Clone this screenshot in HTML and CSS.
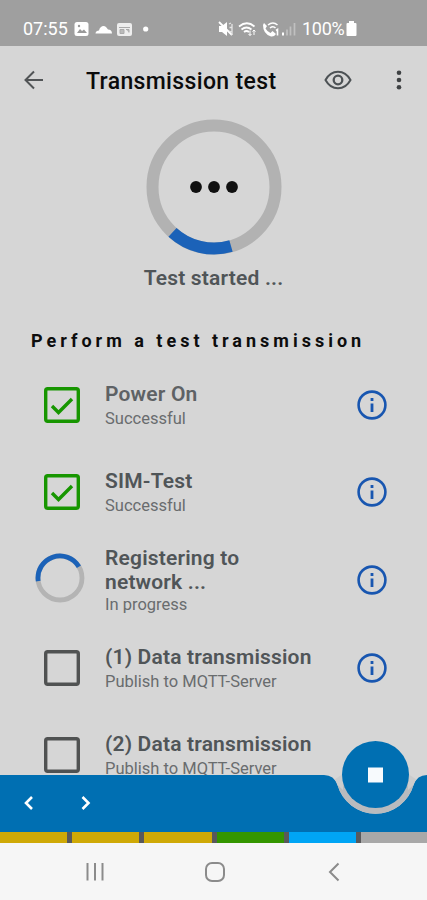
FILE: index.html
```html
<!DOCTYPE html>
<html lang="en">
<head>
<meta charset="utf-8">
<title>Transmission test</title>
<link rel="stylesheet" href="styles.css">
</head>
<body>
<div class="screen">
  <header class="status">
    <span class="clock">07:55</span>
    <svg class="status-left" width="76" height="18" viewBox="0 0 76 18">
      <rect x="0.5" y="2" width="14" height="14" rx="2.5" fill="#fff"/>
      <path d="M3 13l3-4 2 2 2-1.500 3 3.500z" fill="#999"/><circle cx="5" cy="6" r="1.200" fill="#999"/>
      <path d="M21.500 13.500c0-2 1.800-3 3.500-3 .8-4 4.500-5.500 7-3.500l2 2.500c2.500 0 4 1.500 4 4z" fill="#fff"/>
      <rect x="43" y="3" width="15" height="13" rx="2" fill="#eee"/>
      <path d="M45 7.500h11M46 9.500h4v4h-4zM52 9.500h3v3" stroke="#aaa" fill="#bbb"/>
      <circle cx="71.700" cy="9" r="2.600" fill="#fff"/>
    </svg>
    <svg class="status-right" width="80" height="18" viewBox="0 0 80 18">
      <path d="M1 6h3l5-4v14l-5-4H1z" fill="#fff"/><path d="M1 2l13 13" stroke="#fff" stroke-width="1.800"/><path d="M11 4l2-1M11.500 7.500h3M11 11l3 1M14 4v11" stroke="#e5e5e5" stroke-width="1.300"/>
      <g fill="none" stroke="#fff" stroke-width="1.700"><path d="M21 6.500q8-6.500 15.500 0M23.500 9.500q5-4 10 0M26 12q2.500-2 5 0"/><path d="M32 10.500v5M36 10v5M30.500 14l1.500 1.500 1.500-1.500M34.500 11.500l1.500-1.500 1.500 1.500" stroke-width="1"/></g>
      <path d="M46 3l3 3-1.500 2.500q2 3.500 5 4.500l2-2 3.500 3q-2 3-5 2.500Q45 14 45 5z" fill="#fff"/>
      <path d="M50 5q5-4 9.500 0M52 8q3-2.500 5.500 0M58 10.500l1.500-1v6" fill="none" stroke="#fff" stroke-width="1.600"/>
      <path d="M65 12.500v3" stroke="#fff" stroke-width="2"/><path d="M69 9.500v6M72.500 6.500v9M76.500 3v12.500" stroke="#c0c0c0" stroke-width="1.700"/>
    </svg>
    <span class="charge">100%</span>
    <svg width="11" height="16" viewBox="0 0 11 16"><path d="M3 2V0h5v2h1.500q1 0 1 1v11q0 1-1 1h-8q-1 0-1-1V3q0-1 1-1z" fill="#fff"/></svg>
  </header>

  <div class="appbar">
    <svg width="20" height="20" viewBox="0 0 20 20"><path d="M19 10H2M10 1.500L1.500 10l8.500 8.500" fill="none" stroke="#515456" stroke-width="2"/></svg>
    <h1>Transmission test</h1>
    <svg class="eye" width="28" height="20" viewBox="0 0 28 20" fill="none" stroke="#4d5255"><path d="M1.500 10Q6 1.700 14 1.700T26.500 10Q22 18.300 14 18.300T1.500 10z" stroke-width="2"/><circle cx="14" cy="10" r="4.300" stroke-width="2.300"/></svg>
    <svg class="more" width="6" height="20" viewBox="0 0 6 20" fill="#3f4244"><circle cx="3" cy="2.800" r="2.300"/><circle cx="3" cy="10" r="2.300"/><circle cx="3" cy="17.200" r="2.300"/></svg>
  </div>

  <section class="progress">
    <svg width="136" height="136" viewBox="0 0 136 136">
      <circle cx="68" cy="68" r="61.500" fill="none" stroke="#b2b2b2" stroke-width="12"/>
      <path d="M85 127.100A61.500 61.500 0 0 1 26.500 113.300" fill="none" stroke="#1b62b8" stroke-width="12"/>
      <g fill="#101010"><circle cx="50" cy="68" r="5.900"/><circle cx="68" cy="68" r="5.900"/><circle cx="86" cy="68" r="5.900"/></g>
    </svg>
    <p>Test started ...</p>
  </section>

  <h2>Perform a test transmission</h2>

  <main class="steps">
    <div class="step">
      <span class="mark"><svg width="36" height="36" viewBox="0 0 36 36" fill="none" stroke="#179600"><rect x="1.700" y="1.700" width="32.600" height="32.600" rx="2" stroke-width="3.400"/><path d="M8 19l6.500 6.500L28 12" stroke-width="3.400"/></svg></span>
      <div class="label"><h3 class="soft">Power On</h3><p>Successful</p></div>
      <svg class="info" width="30" height="30" viewBox="0 0 30 30"><circle cx="15" cy="15" r="13.400" fill="none" stroke="#1856b0" stroke-width="2.600"/><path d="M15 13.500v8.500M15 8v3" stroke="#1856b0" stroke-width="2.800"/></svg>
    </div>
    <div class="step">
      <span class="mark"><svg width="36" height="36" viewBox="0 0 36 36" fill="none" stroke="#179600"><rect x="1.700" y="1.700" width="32.600" height="32.600" rx="2" stroke-width="3.400"/><path d="M8 19l6.500 6.500L28 12" stroke-width="3.400"/></svg></span>
      <div class="label"><h3>SIM-Test</h3><p>Successful</p></div>
      <svg class="info" width="30" height="30" viewBox="0 0 30 30"><circle cx="15" cy="15" r="13.400" fill="none" stroke="#1856b0" stroke-width="2.600"/><path d="M15 13.500v8.500M15 8v3" stroke="#1856b0" stroke-width="2.800"/></svg>
    </div>
    <div class="step">
      <span class="mark spinner"><svg width="50" height="50" viewBox="0 0 50 50" fill="none" stroke-width="4.800"><circle cx="25" cy="25" r="22" stroke="#b4b4b4"/><path d="M3.200 28.100A22 22 0 0 1 43.900 13.700" stroke="#1b62b8"/></svg></span>
      <div class="label two-line"><h3>Registering to<br>network ...</h3><p>In progress</p></div>
      <svg class="info" width="30" height="30" viewBox="0 0 30 30"><circle cx="15" cy="15" r="13.400" fill="none" stroke="#1856b0" stroke-width="2.600"/><path d="M15 13.500v8.500M15 8v3" stroke="#1856b0" stroke-width="2.800"/></svg>
    </div>
    <div class="step">
      <span class="mark"><svg width="36" height="36" viewBox="0 0 36 36" fill="none" stroke="#505252"><rect x="1.700" y="1.700" width="32.600" height="32.600" rx="2" stroke-width="3.400"/></svg></span>
      <div class="label"><h3>(1) Data transmission</h3><p>Publish to MQTT-Server</p></div>
      <svg class="info" width="30" height="30" viewBox="0 0 30 30"><circle cx="15" cy="15" r="13.400" fill="none" stroke="#1856b0" stroke-width="2.600"/><path d="M15 13.500v8.500M15 8v3" stroke="#1856b0" stroke-width="2.800"/></svg>
    </div>
    <div class="step">
      <span class="mark"><svg width="36" height="36" viewBox="0 0 36 36" fill="none" stroke="#505252"><rect x="1.700" y="1.700" width="32.600" height="32.600" rx="2" stroke-width="3.400"/></svg></span>
      <div class="label"><h3>(2) Data transmission</h3><p>Publish to MQTT-Server</p></div>
    </div>
  </main>

  <footer class="dock">
    <svg class="dock-shape" width="427" height="92" viewBox="0 0 427 92">
      <path d="M0 35H324Q334 35 337.500 45A39.500 39.500 0 0 0 413.500 45Q417 35 427 35V92H0z" fill="#006fb2"/>
      <path d="M337.500 45A39.500 39.500 0 0 0 413.500 45L408 36H343z" fill="#b9bbbe"/>
      <path d="M334.500 39.500Q336.500 42 337.500 45L343 50V34zM416.500 39.500Q414.500 42 413.500 45L408 50V34z" fill="#cbcccd"/>
      <circle cx="375.500" cy="34.500" r="33.500" fill="#006fb2"/>
      <rect x="368" y="27.500" width="15" height="15" fill="#f7fafd"/>
      <path d="M32 57l-6 6 6 6M82.500 57l6 6-6 6" fill="none" stroke="#fff" stroke-width="2.600"/>
    </svg>
    <div class="segments"><i class="gold"></i><i class="gold"></i><i class="gold"></i><i class="green"></i><i class="sky"></i><i class="gray"></i></div>
    <nav class="navbar">
      <svg width="20" height="20" viewBox="0 0 20 20"><path d="M2.500 1v17.500M10 1v17.500M17.500 1v17.500" stroke="#8b8b8b" stroke-width="2"/></svg>
      <svg width="20" height="20" viewBox="0 0 20 20"><rect x="1" y="1" width="18" height="18" rx="6" fill="none" stroke="#8b8b8b" stroke-width="2"/></svg>
      <svg width="20" height="20" viewBox="0 0 20 20"><path d="M14.500 1.500L6 10l8.500 8.500" fill="none" stroke="#8b8b8b" stroke-width="2"/></svg>
    </nav>
  </footer>
</div>
</body>
</html>
```

FILE: styles.css
```css
* { box-sizing: border-box; }
body, h1, h2, h3, p { margin: 0; }
body { font-family: Roboto, sans-serif; background: #d6d6d6; }
svg { display: block; flex: none; }

.screen { position: relative; width: 427px; height: 900px; overflow: hidden; display: flex; flex-direction: column; }

.status { height: 46px; flex: none; background: #9f9f9f; display: flex; align-items: center; padding: 11px 0 0 23px; color: #fff; font-size: 18px; line-height: 20px; }
.clock { width: 51px; }
.status-right { margin-left: 68px; }
.charge { width: 43px; margin-left: 4px; margin-right: 1px; letter-spacing: -0.3px; }

.appbar { height: 68px; flex: none; display: flex; align-items: center; padding-left: 24px; }
.appbar h1 { width: 238px; margin-left: 42px; margin-top: 3px; font-size: 23px; line-height: 30px; font-weight: 500; letter-spacing: 0.350px; color: #0b0b0b; }
.more { margin-left: 44px; }

.progress { flex: none; height: 210px; padding-top: 4.500px; display: flex; flex-direction: column; align-items: center; }
.progress p { margin-top: 8px; font-size: 21px; line-height: 30px; font-weight: 600; letter-spacing: 0.180px; color: #505558; }

h2 { flex: none; height: 37px; padding: 5px 0 0 31px; font-size: 18px; line-height: 24px; font-weight: 700; letter-spacing: 4px; color: #0d0d0d; white-space: nowrap; }

.steps { flex: none; display: flex; flex-direction: column; }
.step { height: 87.600px; display: flex; align-items: center; padding-left: 35px; }
.mark { width: 70px; display: flex; padding-left: 9px; }
.spinner { padding: 0 0 4px; }
.label { width: 252px; padding-top: 1px; color: #505558; }
.label h3 { font-size: 21px; line-height: 25px; font-weight: 600; letter-spacing: 0.180px; white-space: nowrap; }
.label h3.soft { color: #5e6265; }
.label p { font-size: 16.500px; line-height: 20px; margin-top: 2px; color: #696c6e; }
.two-line h3 { line-height: 24.500px; }
.two-line p { margin-top: 0; }

.dock { position: absolute; left: 0; right: 0; bottom: 0; }
.segments { display: flex; gap: 5px; height: 11px; background: #59595b; }
.segments i { width: 67.200px; flex: none; }
.segments .gold { background: #cfa906; }
.segments .green { background: #349600; }
.segments .sky { background: #00a5f5; }
.segments .gray { background: #a8a8a8; }
.navbar { height: 57px; background: #f6f6f6; display: flex; align-items: center; justify-content: space-between; padding: 1px 83px 0 85px; }
```
